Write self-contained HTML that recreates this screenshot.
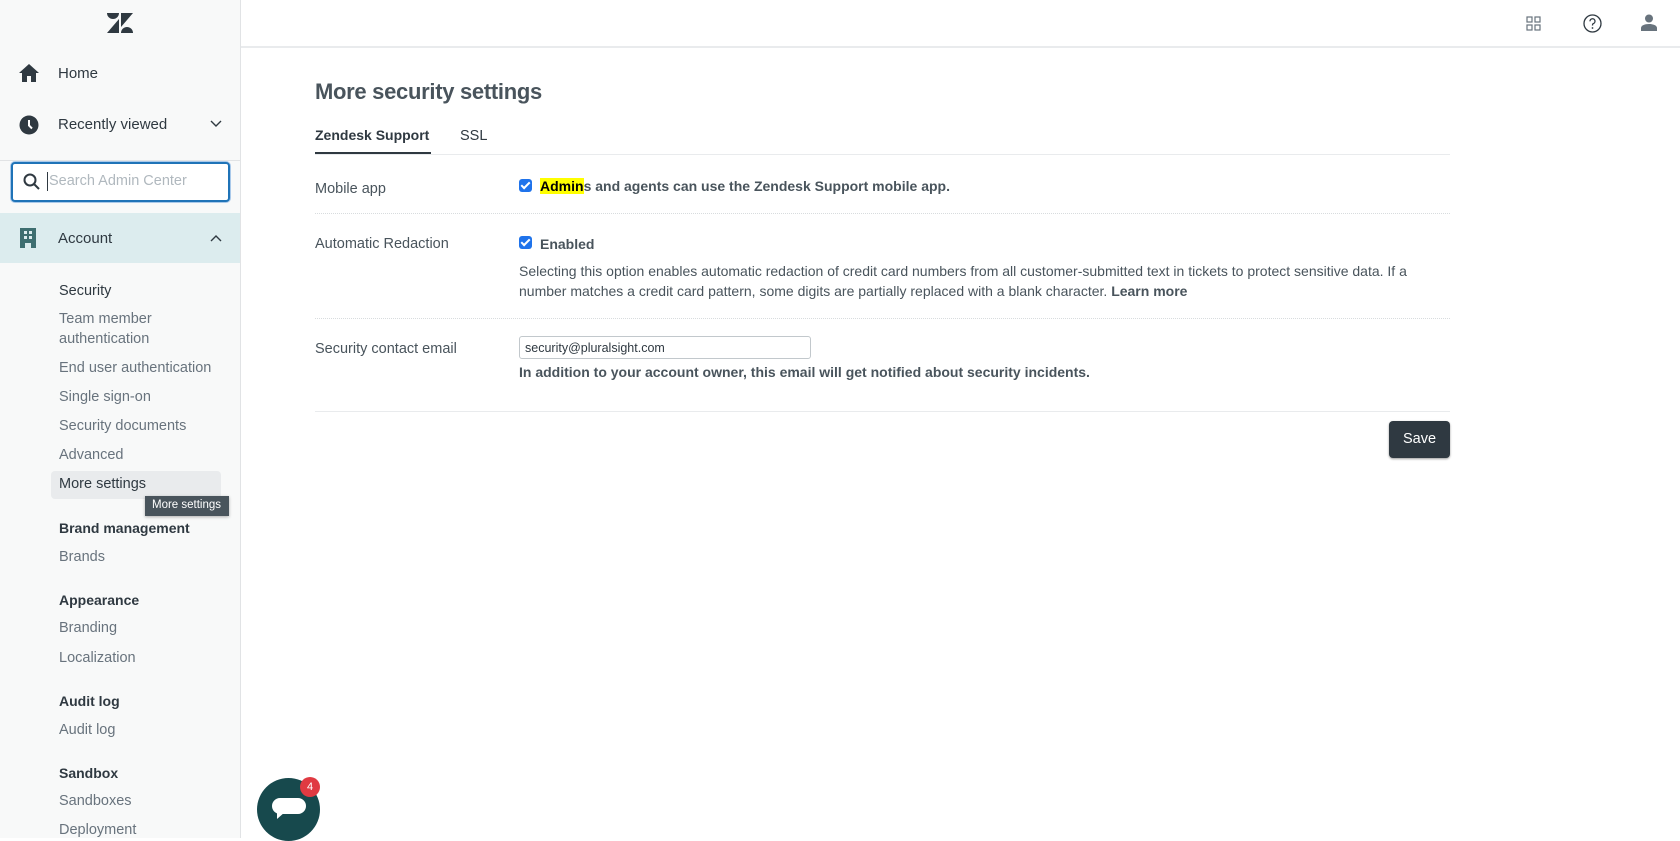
<!DOCTYPE html>
<html><head><meta charset="utf-8"><style>
*{margin:0;padding:0;box-sizing:border-box}
body{width:1680px;height:838px;overflow:hidden;font-family:"Liberation Sans",Arial,sans-serif;background:#fff;position:relative;color:#2f3941}
.sb{position:absolute;left:0;top:0;width:241px;height:838px;background:#f8f9f9;border-right:1px solid #e1e3e5}
.a{position:absolute;white-space:nowrap}
.nav{font-size:15px;color:#2f3941;left:58px}
.sub{font-size:14.5px;color:#68737d;left:59px}
.hd{font-size:14.5px;color:#2f3941;left:59px;font-weight:bold}
.top{position:absolute;left:241px;right:0;top:0;height:48px;border-bottom:2px solid #e9ebed}
.m{font-size:14.5px;color:#49545c}
.b{font-weight:bold;font-size:14px}
.hr{position:absolute;left:315px;width:1135px;height:0;border-top:1px dotted #d8dcde}
.cb{position:absolute;width:13px;height:13px;background:#1f73eb;border-radius:3px}
.cb:after{content:"";position:absolute;left:4px;top:1px;width:3px;height:7px;border:solid #fff;border-width:0 2px 2px 0;transform:rotate(45deg)}
</style></head><body>
<div class="sb">
<svg class="a" style="left:107px;top:13px" width="26" height="20" viewBox="0 0 26 20"><g fill="#2f3941"><path d="M0 0h12a6 6 0 0 1-12 0z"/><path d="M14 0h12L14 14z"/><path d="M12 6v14H0z"/><path d="M14 20a6 6 0 0 1 12 0z"/></g></svg>
<svg class="a" style="left:18px;top:63px" width="22" height="20" viewBox="0 0 22 20"><path d="M11 1L1 10h3v9h5v-6h4v6h5v-9h3z" fill="#2f3941"/></svg>
<div class="a nav" style="top:65px">Home</div>
<svg class="a" style="left:19px;top:115px" width="20" height="20" viewBox="0 0 20 20"><circle cx="10" cy="10" r="9.5" fill="#2f3941"/><path d="M10 5v5.5l3 3" stroke="#fff" stroke-width="2" fill="none"/></svg>
<div class="a nav" style="top:116px">Recently viewed</div>
<svg class="a" style="left:210px;top:120px" width="12" height="8" viewBox="0 0 12 8"><path d="M1 1l5 5 5-5" stroke="#2f3941" stroke-width="1.4" fill="none"/></svg>
<div class="a" style="left:0;top:160px;width:240px;border-top:1px solid #e1e3e5"></div>
<div class="a" style="left:11px;top:162px;width:219px;height:40px;border:2px solid #1f73b7;border-radius:4px;background:#fff;box-shadow:0 0 0 1px #a9c9ea"></div>
<svg class="a" style="left:23px;top:173px" width="18" height="18" viewBox="0 0 18 18"><circle cx="7" cy="7" r="5.5" stroke="#2f3941" stroke-width="2" fill="none"/><path d="M11 11l5 5" stroke="#2f3941" stroke-width="2"/></svg>
<div class="a" style="left:47px;top:172px;width:1px;height:19px;background:#2f3941"></div>
<div class="a" style="left:49px;top:173px;font-size:14.5px;color:#b0b8be">Search Admin Center</div>
<div class="a" style="left:0;top:213px;width:240px;height:50px;background:#dcecee"></div>
<svg class="a" style="left:20px;top:228px" width="16" height="20" viewBox="0 0 16 20"><path d="M0 0h16v20h-5v-5H5v5H0z" fill="#3e6e70"/><rect x="4" y="3" width="3" height="3" fill="#dcecee"/><rect x="9" y="3" width="3" height="3" fill="#dcecee"/><rect x="4" y="8" width="3" height="3" fill="#dcecee"/><rect x="9" y="8" width="3" height="3" fill="#dcecee"/></svg>
<div class="a nav" style="top:230px">Account</div>
<svg class="a" style="left:210px;top:234px" width="12" height="8" viewBox="0 0 12 8"><path d="M1 7l5-5 5 5" stroke="#2f3941" stroke-width="1.4" fill="none"/></svg>
<div class="a hd" style="top:283px;font-weight:normal;color:#2f3941">Security</div>
<div class="a sub" style="top:311px">Team member</div>
<div class="a sub" style="top:331px">authentication</div>
<div class="a sub" style="top:360px">End user authentication</div>
<div class="a sub" style="top:389px">Single sign-on</div>
<div class="a sub" style="top:418px">Security documents</div>
<div class="a sub" style="top:447px">Advanced</div>
<div class="a" style="left:51px;top:471px;width:170px;height:28px;background:#e9ebed;border-radius:4px"></div>
<div class="a sub" style="top:476px;color:#2f3941">More settings</div>
<div class="a" style="left:145px;top:496px;width:84px;height:20px;background:#49545c;color:#fff;font-size:11.5px;padding:3px 0 0 7px;box-shadow:0 1px 3px rgba(0,0,0,.3)">More settings</div>
<div class="a hd" style="top:520px;font-size:14px">Brand management</div>
<div class="a sub" style="top:549px">Brands</div>
<div class="a hd" style="top:592px;font-size:14px">Appearance</div>
<div class="a sub" style="top:620px">Branding</div>
<div class="a sub" style="top:650px">Localization</div>
<div class="a hd" style="top:693px;font-size:14px">Audit log</div>
<div class="a sub" style="top:722px">Audit log</div>
<div class="a hd" style="top:765px;font-size:14px">Sandbox</div>
<div class="a sub" style="top:793px">Sandboxes</div>
<div class="a sub" style="top:822px">Deployment</div>
</div>
<div class="top"></div>
<svg class="a" style="left:1526px;top:16px" width="15" height="15" viewBox="0 0 15 15"><g fill="none" stroke="#68737d" stroke-width="1.2"><rect x="1" y="1" width="5" height="5"/><rect x="9" y="1" width="5" height="5"/><rect x="1" y="9" width="5" height="5"/><rect x="9" y="9" width="5" height="5"/></g></svg>
<svg class="a" style="left:1583px;top:14px" width="19" height="19" viewBox="0 0 19 19"><circle cx="9.5" cy="9.5" r="8.5" fill="none" stroke="#2f3941" stroke-width="1.3"/><path d="M7 7.3a2.5 2.5 0 1 1 3.3 2.3c-.6.3-.8.7-.8 1.4v.5" fill="none" stroke="#2f3941" stroke-width="1.3"/><circle cx="9.5" cy="14" r=".9" fill="#2f3941"/></svg>
<svg class="a" style="left:1641px;top:14px" width="16" height="17" viewBox="0 0 16 17"><circle cx="8" cy="4.5" r="4" fill="#68737d"/><path d="M0 17v-3c0-2.5 3.5-4 8-4s8 1.5 8 4v3z" fill="#68737d"/></svg>

<div class="a" style="left:315px;top:79px;font-size:22px;color:#49545c;font-weight:bold;letter-spacing:-0.3px">More security settings</div>
<div class="a b" style="left:315px;top:127px;color:#2f3941">Zendesk Support</div>
<div class="a" style="left:460px;top:128px;font-size:14.5px;color:#2f3941">SSL</div>
<div class="a" style="left:315px;top:152px;width:116px;height:3px;background:#2f3941"></div>
<div class="hr" style="top:154px;border-top:1px solid #e9ebed"></div>
<div class="a m" style="left:315px;top:181px">Mobile app</div>
<div class="cb" style="left:519px;top:179px"></div>
<div class="a m b" style="left:540px;top:178px"><span style="background:#ffff00;color:#000">Admin</span>s and agents can use the Zendesk Support mobile app.</div>
<div class="hr" style="top:213px"></div>
<div class="a m" style="left:315px;top:236px">Automatic Redaction</div>
<div class="cb" style="left:519px;top:236px"></div>
<div class="a m b" style="left:540px;top:236px">Enabled</div>
<div class="a m" style="left:519px;top:261px;font-size:14px;line-height:20px;white-space:normal;width:930px">Selecting this option enables automatic redaction of credit card numbers from all customer-submitted text in tickets to protect sensitive data. If a number matches a credit card pattern, some digits are partially replaced with a blank character. <b>Learn more</b></div>
<div class="hr" style="top:318px"></div>
<div class="a m" style="left:315px;top:341px">Security contact email</div>
<div class="a" style="left:519px;top:336px;width:292px;height:23px;border:1px solid #c2c8cc;border-radius:3px;font-size:12.5px;padding:4px 0 0 5px;color:#2f3941">security@pluralsight.com</div>
<div class="a m b" style="left:519px;top:364px">In addition to your account owner, this email will get notified about security incidents.</div>
<div class="hr" style="top:411px;border-top:1px solid #e9ebed"></div>
<div class="a" style="left:1389px;top:421px;width:61px;height:37px;background:#2f3941;border-radius:4px;color:#fff;font-size:14.5px;text-align:center;line-height:37px;box-shadow:0 1px 2px rgba(0,0,0,.4)">Save</div>

<div class="a" style="left:257px;top:778px;width:63px;height:63px;border-radius:50%;background:#17494d"></div>
<div class="a" style="left:272px;top:798px;width:34px;height:16px;border-radius:8px;background:#fff"></div>
<svg class="a" style="left:277px;top:812px" width="8" height="7"><path d="M0 0h8L0 7z" fill="#fff"/></svg>
<div class="a" style="left:300px;top:777px;width:20px;height:20px;border-radius:50%;background:#e03a42;color:#fff;font-size:11px;text-align:center;line-height:20px">4</div>
</body></html>
